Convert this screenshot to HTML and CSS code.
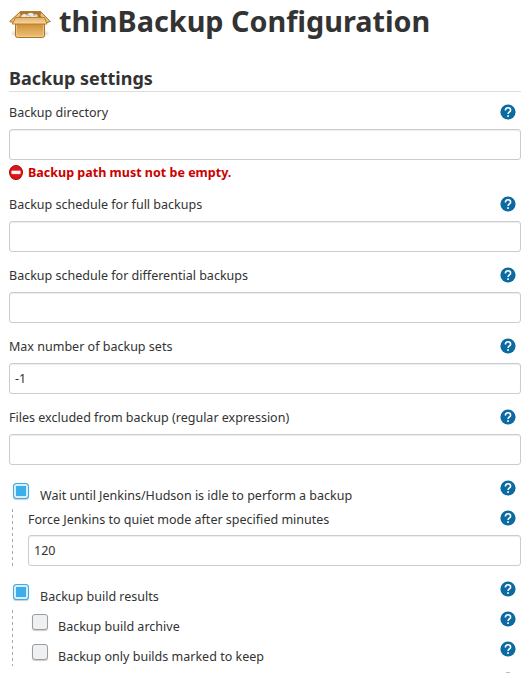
FILE: index.html
```html
<!DOCTYPE html>
<html lang="en">
<head>
<meta charset="utf-8">
<title>thinBackup Configuration</title>
<link rel="stylesheet" href="styles.css">
</head>
<body>
<svg class="defs" width="0" height="0">
  <defs>
    <symbol id="help" viewBox="0 0 16 16">
      <circle cx="8" cy="8" r="7.6" fill="#0b6aa2"/>
      <path d="M5.4 6.4C5.4 4.600 6.500 3.700 8 3.700s2.600 1 2.600 2.500c0 1.700-2.500 1.900-2.500 3.900" fill="none" stroke="#fff" stroke-width="1.6"/>
      <rect x="7.200" y="11.200" width="1.700" height="1.700" fill="#fff"/>
    </symbol>
  </defs>
</svg>
<main class="page">
  <h1 class="title">
    <svg class="box" viewBox="0 0 48 40" width="48" height="40">
      <defs>
        <linearGradient id="front" x1="0" y1="0" x2="0" y2="1"><stop offset="0" stop-color="#c98b35"/><stop offset=".4" stop-color="#dca550"/><stop offset="1" stop-color="#ebc07a"/></linearGradient>
        <linearGradient id="flap" x1="0" y1="0" x2="0" y2="1"><stop offset="0" stop-color="#e3b166"/><stop offset="1" stop-color="#f7d8a3"/></linearGradient>
        <radialGradient id="shade"><stop offset=".6" stop-color="#888" stop-opacity=".5"/><stop offset="1" stop-color="#888" stop-opacity="0"/></radialGradient>
      </defs>
      <ellipse cx="21" cy="33.500" rx="20" ry="5" fill="url(#shade)"/>
      <path d="M11.500 11.500h20l4 10h-29z" fill="#a8762f" stroke="#b47a27"/>
      <path d="M12 17c0-3 4-4 6-2 2-3 6-3 7 0 3-2 4 0 4 3z" fill="#e9e9e6"/>
      <path d="M17 16.500c2-2 4-1 5 .5M24 16c2-2 4 0 4 1" fill="none" stroke="#b9b9b4"/>
      <path d="M11.500 11.500L.7 21.500l4 1.200 7.300-7z" fill="#ebc07c" stroke="#ad7120"/>
      <path d="M31.500 11.500l9.800 10-4 1.200-6.300-7z" fill="#ebc07c" stroke="#ad7120"/>
      <path d="M6.500 23.500h29v12q0 2-2 2h-25q-2 0-2-2z" fill="url(#front)" stroke="#ad7120"/>
      <path d="M7.500 25v10q0 1.500 1.500 1.500h24q1.500 0 1.500-1.500V25" fill="none" stroke="#f3d09a" stroke-width=".7"/>
      <path d="M6.500 17.500h29l2.500 6.500H3.300z" fill="url(#flap)" stroke="#b98031"/>
    </svg>
    <span>thinBackup Configuration</span>
  </h1>
  <h2 class="section">Backup settings</h2>

  <div class="field">
    <label class="label" for="dir">Backup directory</label><svg class="help"><use href="#help"/></svg>
    <input class="input" id="dir">
    <div class="error">
      <svg viewBox="0 0 14 14" width="14" height="15" preserveAspectRatio="none"><circle cx="7" cy="7" r="6.5" fill="#dc1518" stroke="#b40b0d"/><rect x="2.500" y="5.300" width="9" height="3.200" rx=".6" fill="#fff" stroke="#ef8080" stroke-width=".5"/></svg>
      <span class="error-text">Backup path must not be empty.</span>
    </div>
  </div>
  <div class="field">
    <label class="label" for="full">Backup schedule for full backups</label><svg class="help"><use href="#help"/></svg>
    <input class="input" id="full">
  </div>
  <div class="field">
    <label class="label" for="diff">Backup schedule for differential backups</label><svg class="help"><use href="#help"/></svg>
    <input class="input" id="diff">
  </div>
  <div class="field">
    <label class="label" for="max">Max number of backup sets</label><svg class="help"><use href="#help"/></svg>
    <input class="input" id="max" value="-1">
  </div>
  <div class="field">
    <label class="label" for="files">Files excluded from backup (regular expression)</label><svg class="help"><use href="#help"/></svg>
    <input class="input" id="files">
  </div>

  <div class="check">
    <span class="tick on"></span><span class="check-text">Wait until Jenkins/Hudson is idle to perform a backup</span><svg class="help"><use href="#help"/></svg>
  </div>
  <div class="nested">
    <div class="field">
      <label class="label" for="quiet">Force Jenkins to quiet mode after specified minutes</label><svg class="help"><use href="#help"/></svg>
      <input class="input" id="quiet" value="120">
    </div>
  </div>
  <div class="check">
    <span class="tick on"></span><span class="check-text">Backup build results</span><svg class="help"><use href="#help"/></svg>
  </div>
  <div class="nested options">
    <div class="check">
      <span class="tick"></span><span class="check-text">Backup build archive</span><svg class="help"><use href="#help"/></svg>
    </div>
    <div class="check">
      <span class="tick"></span><span class="check-text">Backup only builds marked to keep</span><svg class="help"><use href="#help"/></svg>
    </div>
  </div>
  <div class="check next"><svg class="help"><use href="#help"/></svg></div>
</main>
</body>
</html>
```
FILE: styles.css
```css
* { box-sizing: border-box; }
html, body { height: 100%; overflow: hidden; }
body {
  margin: 0;
  background: #fff;
  color: #333;
  font: 12.53px/18px "Noto Sans", "Open Sans", sans-serif;
}
.defs { display: block; }
.page { padding: 0 8px 0 9px; }
.title {
  display: flex;
  height: 68px;
  margin: 0;
  font-size: 28.8px;
  line-height: 41px;
  font-weight: 700;
  white-space: nowrap;
}
.box { flex: none; margin-right: 2px; }
.section {
  height: 24px;
  margin: 0;
  border-bottom: 1px solid #ddd;
  font-size: 18px;
  line-height: 20px;
  font-weight: 700;
}
.field {
  display: grid;
  grid-template-columns: 1fr 16px;
  row-gap: 7px;
  margin-bottom: 14px;
  padding-right: 5px;
}
.section + .field { margin-top: 11px; }
.label { height: 19px; padding-top: 1px; }
.help { width: 16px; height: 16px; flex: none; }
.field .help { margin-top: 1px; }
.input {
  grid-column: 1 / -1;
  width: calc(100% + 5px);
  height: 31px;
  padding: 0 5px 1px;
  border: 1px solid #ccc;
  border-radius: 3px;
  box-shadow: inset 0 1px 1px rgba(0, 0, 0, .075);
  background: #fff;
  color: #333;
  font: inherit;
}
.error {
  grid-column: 1 / -1;
  display: flex;
  align-items: center;
  gap: 5px;
  height: 18px;
  margin-top: -4px;
  color: #c00;
  font-weight: 700;
}
.error-text { padding-top: 2px; }
.check {
  display: flex;
  height: 30px;
  padding: 1px 5px 0 4px;
}
.tick {
  width: 16px;
  height: 16px;
  margin-top: 3px;
  border: 1px solid #9b9c9e;
  border-radius: 3px;
  background: #eff0f1;
  box-shadow: 0 1px 1px rgba(0, 0, 0, .2);
  flex: none;
}
.tick.on {
  border-color: #3daee9;
  background: #3daee9;
  box-shadow: inset 0 0 0 2px #d8effb, 0 1px 1px rgba(0, 0, 0, .2);
}
.check-text { flex: 1; margin: 7px 0 0 11px; }
.nested {
  margin-left: 3px;
  padding-left: 16px;
  background: repeating-linear-gradient(#aaa 0 3px, transparent 3px 6px) 0 0 / 1px 100% no-repeat;
}
.nested .field { margin-bottom: 0; }
.nested .label { padding-top: 2px; }
.nested .field .help { margin-top: 1px; }
.nested + .check { margin-top: 14px; }
.options { height: 56px; }
.options .check-text { margin-left: 10px; }
.next { justify-content: flex-end; }
.nested + .next { margin-top: 5px; }
```
